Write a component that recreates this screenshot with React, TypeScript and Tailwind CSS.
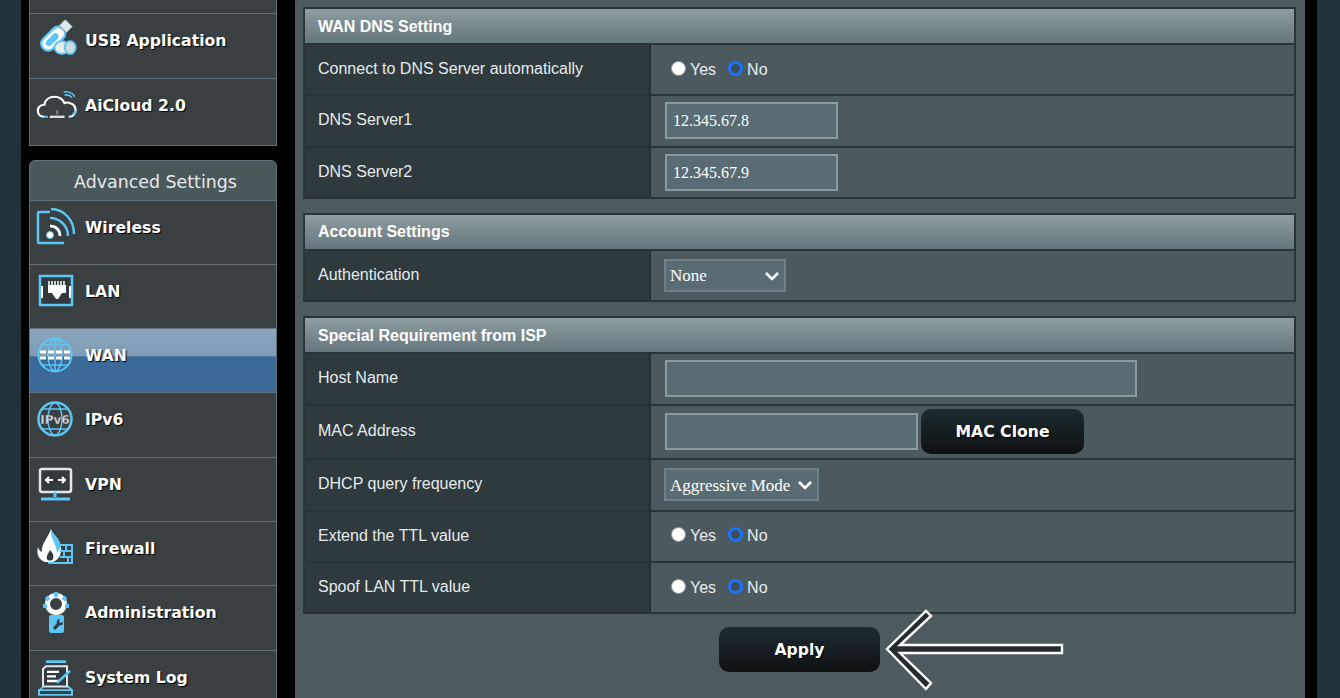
const BLUE = "#5cc6f5";

function UsbIcon() {
  return (
    <svg width="48" height="40" viewBox="0 0 48 40" fill="none">
      <g transform="translate(3 0) scale(0.92)">
        <g transform="rotate(-45 20 20)">
          <rect x="3" y="11" width="30" height="15" rx="7" fill="#fff" stroke={BLUE} strokeWidth="2.5" />
          <rect x="8" y="15" width="17" height="7" rx="3.5" fill={BLUE} />
          <rect x="33" y="13" width="9" height="11" fill="#dfe8ec" stroke="#8fa0a8" />
        </g>
        <ellipse cx="27" cy="30" rx="8" ry="7" fill="#e8eef0" stroke={BLUE} strokeWidth="2" />
        <ellipse cx="36" cy="30" rx="6" ry="7" fill="#cfd9dd" stroke={BLUE} strokeWidth="2" />
      </g>
    </svg>
  );
}

function CloudIcon() {
  return (
    <svg width="48" height="40" viewBox="0 0 48 40" fill="none">
      <g transform="translate(2 3) scale(0.92 0.8)">
        <path d="M9 36c-5 0-7-4-7-8 0-4 3-7 7-7 1-7 6-10 11-10 5 0 9 3 11 8 2-1 4-1 6 0 4 1 6 5 6 9 0 4-3 8-7 8" stroke="#fff" strokeWidth="2.5" />
        <path d="M9 36h4M35 36h2M40 33c2-1 3-3 3-5" stroke={BLUE} strokeWidth="2.5" />
        <path d="M15 36h16" stroke="#d8e0e4" strokeWidth="3" />
        <path d="M23 33v-5" stroke="#d8e0e4" strokeWidth="1" />
        <path d="M30 5c5-1 10 1 12 6M31 9c3-1 6 0 8 3" stroke={BLUE} strokeWidth="2" />
      </g>
    </svg>
  );
}

function WifiIcon() {
  return (
    <svg width="48" height="40" viewBox="0 0 48 40" fill="none">
      <g transform="translate(0 -2)">
        <path d="M16 7H5a1 1 0 0 0-1 1v29a1 1 0 0 0 1 1h25" stroke={BLUE} strokeWidth="2.5" />
        <circle cx="16" cy="30" r="3.5" fill="#fff" stroke={BLUE} />
        <path d="M16 21c6 0 10 4 10 10M16 13c10 0 18 8 18 18M17 4c13 0 23 11 23 25" stroke={BLUE} strokeWidth="2.5" />
        <path d="M16 21c6 0 10 4 10 10" stroke="#fff" strokeWidth="2.5" />
      </g>
    </svg>
  );
}

function LanIcon() {
  return (
    <svg width="48" height="40" viewBox="0 0 48 40" fill="none">
      <rect x="6" y="5" width="32" height="29" fill="#333a3e" stroke={BLUE} strokeWidth="2.5" />
      <path d="M14 14v8h4l4 6h2l4-6h4v-8" fill="#fff" />
      <path d="M15 10v8M18 10v8M21 10v8M24 10v8M27 10v8M30 10v8" stroke="#fff" strokeWidth="1.5" />
      <path d="M8 15v12" stroke="#fff" strokeWidth="2" />
      <path d="M36 15v12" stroke="#fff" strokeWidth="2" />
    </svg>
  );
}

function GlobeIcon() {
  return (
    <svg width="48" height="40" viewBox="0 0 48 40" fill="none">
      <circle cx="21" cy="20" r="16.5" stroke={BLUE} strokeWidth="2" />
      <ellipse cx="21" cy="20" rx="7" ry="16" stroke={BLUE} strokeWidth="1.5" />
      <path d="M21 4v32M8 10h26M8 30h26" stroke={BLUE} strokeWidth="1.5" />
      <path d="M6 17h30M6 23h30" stroke="#fff" strokeWidth="3" strokeDasharray="6 2" />
    </svg>
  );
}

function Ipv6Icon() {
  return (
    <svg width="48" height="40" viewBox="0 0 48 40" fill="none">
      <circle cx="21" cy="20" r="16.5" stroke={BLUE} strokeWidth="2.5" />
      <ellipse cx="21" cy="20" rx="7" ry="16" stroke={BLUE} strokeWidth="1.5" />
      <path d="M8 10h26M8 30h26" stroke={BLUE} strokeWidth="1.5" />
      <text x="21" y="25" textAnchor="middle" fontSize="12" fontWeight="700" fill="#d8dee0" stroke="#555" strokeWidth=".4" fontFamily="'DejaVu Sans', sans-serif">IPv6</text>
    </svg>
  );
}

function VpnIcon() {
  return (
    <svg width="48" height="40" viewBox="0 0 48 40" fill="none">
      <rect x="6" y="5" width="31" height="23" rx="2" fill="#333a3e" stroke="#dce8ec" strokeWidth="2.5" />
      <path d="M12 16h7M15 13l-3 3 3 3M24 16h7M28 13l3 3-3 3" stroke="#fff" strokeWidth="2" />
      <path d="M21 28v5" stroke={BLUE} strokeWidth="3" />
      <path d="M7 35h29" stroke={BLUE} strokeWidth="3" />
    </svg>
  );
}

function FireIcon() {
  return (
    <svg width="48" height="40" viewBox="0 0 48 40" fill="none">
      <path d="M17 1c2 6 9 9 10 18 1 8-3 14-9 15H11C5 32 2 26 4 19c1 3 2 4 4 5-1-8 6-14 9-23z" fill="#fff" />
      <path d="M17 1c2 6 9 9 10 18l-4 6C22 14 16 11 17 1z" fill={BLUE} />
      <path d="M16 22c3 3 4 6 3 9-1 2-5 2-6 0-1-3 1-5 3-9z" fill="#333a3e" />
      <path d="M26 17h12v18H14M26 23h12M26 29h12M32 17v6M30 23v6M34 29v6" stroke={BLUE} strokeWidth="2" />
    </svg>
  );
}

function GearIcon() {
  return (
    <svg width="48" height="42" viewBox="0 0 48 42" fill="none">
      <circle cx="22" cy="12" r="8.5" stroke="#fff" strokeWidth="5" />
      <path d="M22 0v5M12 5l3 3M32 5l-3 3M9 14h4M31 14h4" stroke={BLUE} strokeWidth="4" />
      <rect x="15" y="23" width="15" height="18" rx="2" fill={BLUE} />
      <path d="M26 27c-2 0-4 2-3 4l-4 5 2 2 5-5c2 1 3-1 3-3l-3 1-1-2z" fill="#333a3e" />
    </svg>
  );
}

function LogIcon() {
  return (
    <svg width="48" height="42" viewBox="0 0 48 42" fill="none">
      <g transform="translate(0 1) scale(1 0.92)">
        <path d="M12 4h20" stroke={BLUE} strokeWidth="3" />
        <path d="M12 9h21v22H9V12z" fill="#333a3e" stroke="#dce8ec" strokeWidth="2" />
        <path d="M13 15h12M13 20h9M13 25h12" stroke="#fff" strokeWidth="2.5" />
        <path d="M22 26l13-13 2 2-13 13z" fill={BLUE} />
        <path d="M5 35h33v5H5z" stroke={BLUE} strokeWidth="2" />
        <path d="M9 31L5 36M34 31l4 4" stroke={BLUE} strokeWidth="2" />
      </g>
    </svg>
  );
}

function NavItem({ icon, label, active, h = "h-[64.3px]" }: { icon: React.ReactNode; label: string; active?: boolean; h?: string }) {
  return (
    <div
      className={
        "flex items-start border-b border-[#62727a] shrink-0 " + h + " " +
        (active ? "bg-[linear-gradient(#8ba6bd_0,#7f9cb6_43%,#3b6a99_44%,#3b6a99_100%)]" : "bg-[#3a3f42]")
      }
    >
      <div className="w-[55px] pl-[4px] pt-[6px] h-[54px] shrink-0">{icon}</div>
      <span className="pt-[16px] text-white font-bold text-[15.7px] leading-[22px] font-['DejaVu_Sans',sans-serif] [text-shadow:1px_1px_1px_#000]">
        {label}
      </span>
    </div>
  );
}

function Sidebar() {
  return (
    <aside className="w-[248px] ml-[8px] shrink-0 flex flex-col">
      <div className="h-[14px] bg-[#3a3f42] border-b border-x border-[#62727a] shrink-0" />
      <div className="border-x border-[#62727a]">
        <NavItem icon={<UsbIcon />} label="USB Application" h="h-[64.6px]" />
        <NavItem icon={<CloudIcon />} label="AiCloud 2.0" h="h-[67px]" />
      </div>
      <div className="mt-[14px] rounded-t-[6px] border border-[#62727a] bg-[#4a575b] h-[41px] shrink-0 text-center text-[#e6eaeb] text-[17.4px] leading-[43px] pl-[5px] font-['DejaVu_Sans',sans-serif]">
        Advanced Settings
      </div>
      <div className="border-x border-[#62727a]">
        <NavItem icon={<WifiIcon />} label="Wireless" />
        <NavItem icon={<LanIcon />} label="LAN" />
        <NavItem icon={<GlobeIcon />} label="WAN" active />
        <NavItem icon={<Ipv6Icon />} label="IPv6" />
        <NavItem icon={<VpnIcon />} label="VPN" />
        <NavItem icon={<FireIcon />} label="Firewall" />
        <NavItem icon={<GearIcon />} label="Administration" />
        <NavItem icon={<LogIcon />} label="System Log" />
      </div>
    </aside>
  );
}

function Radio({ checked, label }: { checked?: boolean; label: string }) {
  return (
    <span className="flex items-center">
      {checked ? (
        <span className="w-[15px] h-[15px] rounded-full border-[3px] border-[#1a73ff] bg-[#3f4e55] -mt-[3px]" />
      ) : (
        <span className="w-[15px] h-[15px] rounded-full bg-white border border-[#8c969b] -mt-[3px]" />
      )}
      <span className="ml-[4px] text-[16px] text-[#e8ecee]">{label}</span>
    </span>
  );
}

function YesNo() {
  return (
    <div className="flex gap-[12px] pl-[20px]">
      <Radio label="Yes" />
      <Radio checked label="No" />
    </div>
  );
}

function TextBox({ value, width }: { value?: string; width: string }) {
  return (
    <div className={"h-[37px] ml-[14px] border-2 border-[#8b9a9f] bg-[#596c74] text-[16px] leading-[33px] pl-[6px] text-white font-['Liberation_Serif',serif] " + width}>
      {value}
    </div>
  );
}

function Select({ value, width }: { value: string; width: string }) {
  return (
    <div className={"h-[33px] ml-[13px] border-2 border-[#6f8187] bg-[#596c74] flex items-center justify-between pl-[4px] pr-[4px] text-[17px] text-white font-['Liberation_Serif',serif] " + width}>
      <span className="pt-px">{value}</span>
      <svg width="16" height="12" viewBox="0 0 16 12" fill="none" className="shrink-0">
        <path d="M2 3l6 6 6-6" stroke="#fff" strokeWidth="2.6" />
      </svg>
    </div>
  );
}

function Row({ label, h = "h-[51.33px]", children }: { label: string; h?: string; children?: React.ReactNode }) {
  return (
    <div className={"flex border-t-2 border-[#2a3337] " + h}>
      <div className="w-[346px] shrink-0 bg-[#2e3a3e] border-r-2 border-[#263034] pl-[13px] pb-[1px] flex items-center text-[16px] text-[#e6eaec]">
        {label}
      </div>
      <div className="flex-1 flex items-center bg-[#4c5a60]">{children}</div>
    </div>
  );
}

function Section({ title, children }: { title: string; children: React.ReactNode }) {
  return (
    <section className="border-2 border-[#2a3337] ml-[8px] mr-[9px] shrink-0">
      <div className="h-[34px] bg-[linear-gradient(#8d9da2,#65767c)] pl-[13px] pt-px flex items-center font-bold text-[16px] text-white">
        {title}
      </div>
      {children}
    </section>
  );
}

function DarkButton({ label, cls }: { label: string; cls: string }) {
  return (
    <button className={"rounded-[10px] bg-[linear-gradient(#1d2c32,#0f1012)] text-white font-bold font-['DejaVu_Sans',sans-serif] text-[15.7px] [text-shadow:1px_1px_0_#000] " + cls}>
      {label}
    </button>
  );
}

export default function App() {
  return (
    <div className="w-[1340px] h-[698px] overflow-hidden flex bg-black font-['Liberation_Sans',sans-serif]">
      <div className="w-[21px] shrink-0 bg-[#22323a]" />
      <Sidebar />
      <div className="w-[18px] shrink-0" />
      <main className="w-[1010px] shrink-0 bg-[#4d5b60] flex flex-col pt-[7px]">
        <Section title="WAN DNS Setting">
          <Row label="Connect to DNS Server automatically"><YesNo /></Row>
          <Row label="DNS Server1"><TextBox value="12.345.67.8" width="w-[173px]" /></Row>
          <Row label="DNS Server2"><TextBox value="12.345.67.9" width="w-[173px]" /></Row>
        </Section>
        <div className="h-[14px] shrink-0" />
        <Section title="Account Settings">
          <Row label="Authentication"><Select value="None" width="w-[122px]" /></Row>
        </Section>
        <div className="h-[14px] shrink-0" />
        <Section title="Special Requirement from ISP">
          <Row label="Host Name"><TextBox width="w-[472px]" /></Row>
          <Row label="MAC Address" h="h-[54.7px]">
            <TextBox width="w-[253px]" />
            <DarkButton label="MAC Clone" cls="ml-[3px] w-[163px] h-[45px]" />
          </Row>
          <Row label="DHCP query frequency"><Select value="Aggressive Mode" width="w-[155px]" /></Row>
          <Row label="Extend the TTL value"><YesNo /></Row>
          <Row label="Spoof LAN TTL value"><YesNo /></Row>
        </Section>
        <div className="relative pt-[13px] pl-[424px] shrink-0">
          <DarkButton label="Apply" cls="w-[161px] h-[45px]" />
          <svg className="absolute left-[586px] top-[-5px]" width="185" height="84" viewBox="0 0 185 84" fill="none">
            <path d="M6 40L45 2l5 5-31 29h162v8H19l31 30-5 6z" fill="#232c30" stroke="#fff" strokeWidth="2.4" />
          </svg>
        </div>
      </main>
      <div className="w-[12px] shrink-0" />
      <div className="flex-1 bg-[#22323a]" />
    </div>
  );
}
